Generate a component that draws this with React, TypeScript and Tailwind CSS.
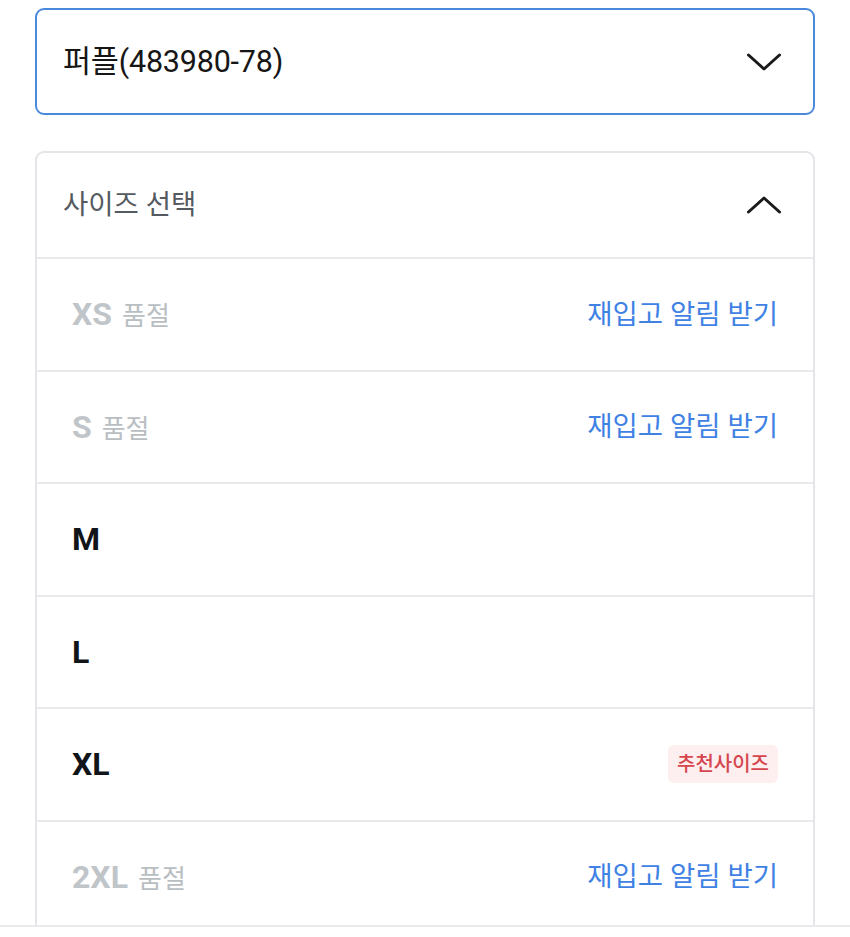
import React from "react";

const font = { fontFamily: 'Roboto, "Noto Sans CJK KR", sans-serif' };

function ChevronDown() {
  return (
    <svg width="34" height="20" viewBox="0 0 34 20" fill="none">
      <path d="M1.5 3 L17 17 L32.5 3" stroke="#1a1a1a" strokeWidth="3" strokeLinecap="round" strokeLinejoin="round" />
    </svg>
  );
}
function ChevronUp() {
  return (
    <svg width="34" height="20" viewBox="0 0 34 20" fill="none">
      <path d="M1.5 17 L17 3 L32.5 17" stroke="#1a1a1a" strokeWidth="3" strokeLinecap="round" strokeLinejoin="round" />
    </svg>
  );
}

type Row = { size: string; soldOut: boolean; badge?: boolean };
const rows: Row[] = [
  { size: "XS", soldOut: true },
  { size: "S", soldOut: true },
  { size: "M", soldOut: false },
  { size: "L", soldOut: false },
  { size: "XL", soldOut: false, badge: true },
  { size: "2XL", soldOut: true },
];

export default function App() {
  return (
    <div className="w-[850px] h-[937px] bg-white flex flex-col overflow-hidden" style={font}>
      <div className="flex-1 overflow-hidden px-[35px] pt-[8px]">
        <div className="h-[107px] border-2 border-[#4a89dc] rounded-[9px] flex items-center justify-between pl-[26px] pr-[32px]">
          <span className="text-[30.5px] text-[#161616] tracking-[-0.2px]">퍼플(483980-78)</span>
          <ChevronDown />
        </div>
        <div className="mt-[36px] border-2 border-[#e3e5e8] rounded-[9px]">
          <div className="h-[104px] flex items-center justify-between pl-[26px] pr-[32px]">
            <span className="text-[27.5px] text-[#555a60]">사이즈 선택</span>
            <ChevronUp />
          </div>
          {rows.map((r) => (
            <div
              key={r.size}
              className="h-[112.5px] border-t-2 border-[#e8eaec] flex items-center justify-between pl-[35px] pr-[35px]"
            >
              <div className="flex items-baseline gap-[10px]">
                <span
                  className={
                    "text-[32px] font-bold " + (r.soldOut ? "text-[#c0c5c9]" : "text-[#111418]")
                  }
                >
                  {r.size}
                </span>
                {r.soldOut && <span className="text-[26px] text-[#b9bec2]">품절</span>}
              </div>
              {r.soldOut && <span className="text-[27.5px] text-[#3f82e4]">재입고 알림 받기</span>}
              {r.badge && (
                <span className="h-[38px] px-[9px] rounded-[6px] bg-[#fdeef0] text-[#d5464d] text-[20px] font-medium flex items-center">
                  추천사이즈
                </span>
              )}
            </div>
          ))}
        </div>
      </div>
      <div className="h-[12px] border-t-2 border-[#e8eaec] bg-white shrink-0" />
    </div>
  );
}
